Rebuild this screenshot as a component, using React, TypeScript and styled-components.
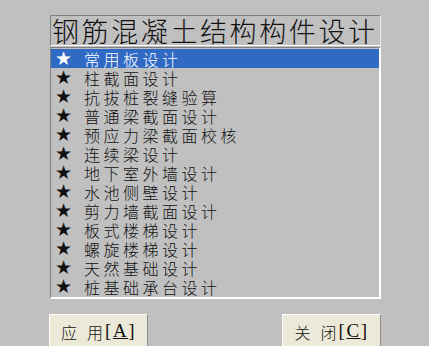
import React from "react";
import styled, { createGlobalStyle } from "styled-components";

const Global = createGlobalStyle`
  html, body { margin: 0; padding: 0; background: #c0c0c0; }
  body { width: 429px; height: 346px; overflow: hidden; }
`;

const Page = styled.div`
  display: flex;
  flex-direction: column;
  width: 331px;
  padding: 15px 0 0 50px;
  font-family: "Noto Sans CJK SC", "DejaVu Sans", sans-serif;
`;

const Title = styled.div`
  height: 29px;
  box-sizing: content-box;
  border-top: 1px solid #808080;
  border-left: 1px solid #808080;
  border-right: 1px solid #e8e8e8;
  border-bottom: 1px solid #ffffff;
  font-size: 27px;
  font-weight: 300;
  line-height: 29px;
  letter-spacing: 2.6px;
  white-space: nowrap;
  color: #111;
  padding-left: 1px;
`;

const List = styled.div`
  margin-top: 1px;
  display: flex;
  flex-direction: column;
  border-top: 1px solid #808080;
  border-left: 1px solid #808080;
  border-right: 2px solid #ffffff;
  border-bottom: 2px solid #ffffff;
  padding: 1px 0 1px 0;
`;

const Row = styled.div<{ $selected?: boolean }>`
  display: flex;
  align-items: center;
  height: 19px;
  background: ${(p) => (p.$selected ? "#316ac5" : "transparent")};
  color: ${(p) => (p.$selected ? "#ffffff" : "#111111")};
`;

const Star = styled.span`
  width: 28px;
  padding-left: 4px;
  box-sizing: border-box;
  font-family: "DejaVu Sans", sans-serif;
  font-size: 19px;
  line-height: 17px;
  flex: none;
`;

const Label = styled.span`
  font-size: 16px;
  font-weight: 300;
  letter-spacing: 3.5px;
  line-height: 18px;
  white-space: nowrap;
  margin-left: 5px;
`;

const ButtonRow = styled.div`
  display: flex;
  justify-content: space-between;
  margin-top: 15px;
  margin-left: -1px;
`;

const Button = styled.div`
  width: 99px;
  height: 36px;
  box-sizing: border-box;
  background: #ece9d8;
  border-top: 1px solid #ffffff;
  border-left: 1px solid #ffffff;
  border-right: 1px solid #8a8a8a;
  display: flex;
  align-items: flex-start;
  justify-content: center;
  gap: 1px;
  padding-top: 5px;
  font-size: 16px;
  font-weight: 300;
  color: #111;
  white-space: pre;
  letter-spacing: 1px;
`;

const Key = styled.span`
  text-decoration: underline;
`;

const Bracket = styled.span`
  font-family: "Liberation Serif", serif;
  font-size: 19px;
  line-height: 22px;
  letter-spacing: 1.5px;
`;

const items = [
  "常用板设计",
  "柱截面设计",
  "抗拔桩裂缝验算",
  "普通梁截面设计",
  "预应力梁截面校核",
  "连续梁设计",
  "地下室外墙设计",
  "水池侧壁设计",
  "剪力墙截面设计",
  "板式楼梯设计",
  "螺旋楼梯设计",
  "天然基础设计",
  "桩基础承台设计",
];

export default function App() {
  return (
    <>
      <Global />
      <Page>
        <Title>钢筋混凝土结构构件设计</Title>
        <List>
          {items.map((t, i) => (
            <Row key={t} $selected={i === 0}>
              <Star>★</Star>
              <Label>{t}</Label>
            </Row>
          ))}
        </List>
        <ButtonRow>
          <Button>
            {"应  用"}
            <Bracket>[<Key>A</Key>]</Bracket>
          </Button>
          <Button>
            {"关  闭"}
            <Bracket>[<Key>C</Key>]</Bracket>
          </Button>
        </ButtonRow>
      </Page>
    </>
  );
}
